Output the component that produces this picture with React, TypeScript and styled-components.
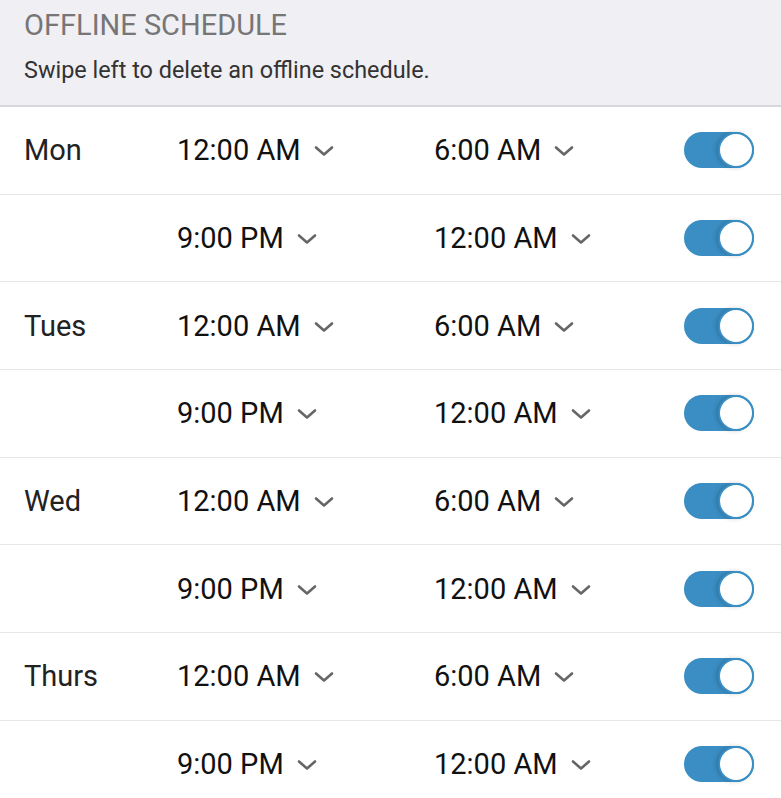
import React from 'react';
import styled, { createGlobalStyle } from 'styled-components';

const GlobalStyle = createGlobalStyle`
  html, body {
    margin: 0;
    padding: 0;
    background: #ffffff;
    font-family: Roboto, 'Noto Sans', Arial, sans-serif;
  }
`;

type Slot = { day?: string; from: string; to: string; on: boolean };

const schedule: Slot[] = [
  { day: 'Mon', from: '12:00 AM', to: '6:00 AM', on: true },
  { from: '9:00 PM', to: '12:00 AM', on: true },
  { day: 'Tues', from: '12:00 AM', to: '6:00 AM', on: true },
  { from: '9:00 PM', to: '12:00 AM', on: true },
  { day: 'Wed', from: '12:00 AM', to: '6:00 AM', on: true },
  { from: '9:00 PM', to: '12:00 AM', on: true },
  { day: 'Thurs', from: '12:00 AM', to: '6:00 AM', on: true },
  { from: '9:00 PM', to: '12:00 AM', on: true },
];

const Chevron = () => (
  <svg width="20" height="12" viewBox="0 0 20 12" fill="none">
    <path d="M2 2.5 L10 9.5 L18 2.5" stroke="#666" strokeWidth="2.6" strokeLinecap="round" strokeLinejoin="round" />
  </svg>
);

const App = () => {
  return (
    <Page>
      <GlobalStyle />
      <Header>
        <Title>OFFLINE SCHEDULE</Title>
        <Hint>Swipe left to delete an offline schedule.</Hint>
      </Header>
      {schedule.map((slot, i) => (
        <Row key={i}>
          <Day>{slot.day}</Day>
          <TimePicker>
            {slot.from}
            <Chevron />
          </TimePicker>
          <TimePicker>
            {slot.to}
            <Chevron />
          </TimePicker>
          <Toggle $on={slot.on} />
        </Row>
      ))}
    </Page>
  );
};

const Page = styled.div`
  width: 781px;
  min-height: 798px;
  background: #fff;
`;

const Header = styled.div`
  background: #efeff4;
  padding: 8px 24px 21px;
  border-bottom: 2px solid #d7d7d9;
`;

const Title = styled.div`
  font-size: 29px;
  line-height: 34px;
  color: #767676;
`;

const Hint = styled.div`
  margin-top: 15px;
  font-size: 23.4px;
  line-height: 27px;
  color: #333;
`;

const Row = styled.div`
  display: grid;
  grid-template-columns: 153px 257px 1fr 70px;
  align-items: center;
  height: 86.7px;
  padding: 0 27px 0 24px;
  border-bottom: 1px solid #e6e6e6;
`;

const Day = styled.div`
  font-size: 29px;
  color: #222;
`;

const TimePicker = styled.div`
  display: flex;
  align-items: center;
  gap: 13px;
  font-size: 29px;
  color: #111;

  svg {
    margin-top: 2px;
  }
`;

const Toggle = styled.span<{ $on: boolean }>`
  position: relative;
  width: 70px;
  height: 36px;
  border-radius: 18px;
  background: ${p => (p.$on ? '#3a8ec4' : '#e5e5ea')};

  &::after {
    content: '';
    position: absolute;
    top: 0;
    ${p => (p.$on ? 'right: 0;' : 'left: 0;')}
    width: 32px;
    height: 32px;
    border-radius: 50%;
    background: #fff;
    border: 2px solid #3a8ec4;
    box-shadow: -2px 0 4px rgba(0, 0, 0, 0.18);
  }
`;

export default App;
